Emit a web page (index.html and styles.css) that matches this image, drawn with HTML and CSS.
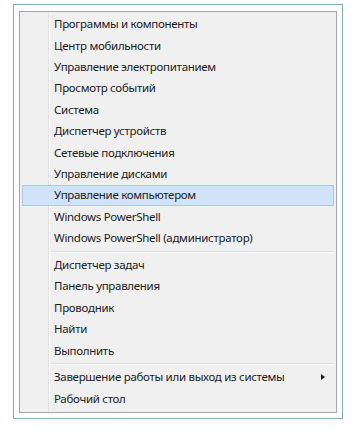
FILE: index.html
```html
<!DOCTYPE html>
<html lang="ru">
<head>
<meta charset="utf-8">
<link rel="stylesheet" href="styles.css">
</head>
<body>
<div class="frame">
  <div class="menu">
    <div class="item">Программы и компоненты</div>
    <div class="item">Центр мобильности</div>
    <div class="item">Управление электропитанием</div>
    <div class="item">Просмотр событий</div>
    <div class="item">Система</div>
    <div class="item">Диспетчер устройств</div>
    <div class="item">Сетевые подключения</div>
    <div class="item">Управление дисками</div>
    <div class="item active">Управление компьютером</div>
    <div class="item">Windows PowerShell</div>
    <div class="item">Windows PowerShell (администратор)</div>
    <div class="sep"></div>
    <div class="item">Диспетчер задач</div>
    <div class="item">Панель управления</div>
    <div class="item">Проводник</div>
    <div class="item">Найти</div>
    <div class="item">Выполнить</div>
    <div class="sep"></div>
    <div class="item">Завершение работы или выход из системы<span class="arrow"></span></div>
    <div class="item">Рабочий стол</div>
  </div>
</div>
</body>
</html>
```

FILE: styles.css
```css
html, body {
  margin: 0;
  padding: 0;
  background: #ffffff;
}

body {
  font-family: "Noto Sans", "Open Sans", sans-serif;
  font-size: 11.5px;
  letter-spacing: -0.3px;
  color: #1b1b1b;
}

.frame {
  box-sizing: border-box;
  margin: 4px 0 0 13px;
  width: 330px;
  height: 415px;
  border: 1px solid #86adb6;
  padding: 6px 5px 5px 5px;
  background: #fdfdfd;
}

.menu {
  box-sizing: border-box;
  height: 402px;
  border: 1px solid #a5a5a5;
  padding: 1.5px 2px;
  background:
    linear-gradient(to right,
      transparent 28px,
      #e1e1e1 28px, #e1e1e1 29px,
      #ffffff 29px, #ffffff 30px,
      transparent 30px),
    #f0f0f0;
}

.item {
  box-sizing: border-box;
  height: 21.4px;
  line-height: 20px;
  padding-left: 31px;
  padding-right: 8px;
  display: flex;
  align-items: center;
  white-space: nowrap;
  border: 1px solid transparent;
}

.item.active {
  background: #d1e3f6;
  border-color: #a9c8eb;
}

.sep {
  height: 5.5px;
  margin-left: 29px;
  display: flex;
  flex-direction: column;
  justify-content: center;
}

.sep::before {
  content: "";
  display: block;
  height: 1px;
  background: #dcdcdc;
  border-bottom: 1px solid #ffffff;
}

.arrow {
  margin-left: auto;
  width: 0;
  height: 0;
  border-top: 3.5px solid transparent;
  border-bottom: 3.5px solid transparent;
  border-left: 4px solid #1b1b1b;
}
```
